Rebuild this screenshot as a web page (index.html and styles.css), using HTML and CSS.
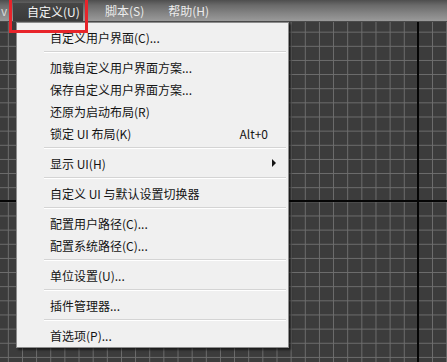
FILE: index.html
```html
<!DOCTYPE html>
<html lang="zh">
<head>
<meta charset="utf-8">
<link rel="stylesheet" href="styles.css">
</head>
<body>
<div class="viewport">
  <div class="menubar">
    <span class="mb-item mb-cut">v</span>
    <span class="mb-item mb-active">自定义(U)</span>
    <span class="mb-item mb-script">脚本(S)</span>
    <span class="mb-item mb-help">帮助(H)</span>
  </div>
  <div class="menu">
    <div class="item">自定义用户界面(C)...</div>
    <div class="sep"></div>
    <div class="item">加载自定义用户界面方案...</div>
    <div class="item">保存自定义用户界面方案...</div>
    <div class="item">还原为启动布局(R)</div>
    <div class="item"><span>锁定 UI 布局(K)</span><span class="key">Alt+0</span></div>
    <div class="sep"></div>
    <div class="item"><span>显示 UI(H)</span><span class="arrow"></span></div>
    <div class="sep"></div>
    <div class="item">自定义 UI 与默认设置切换器</div>
    <div class="sep"></div>
    <div class="item">配置用户路径(C)...</div>
    <div class="item">配置系统路径(C)...</div>
    <div class="sep"></div>
    <div class="item">单位设置(U)...</div>
    <div class="sep"></div>
    <div class="item">插件管理器...</div>
    <div class="sep"></div>
    <div class="item">首选项(P)...</div>
  </div>
  <div class="redbox"></div>
</div>
</body>
</html>
```

FILE: styles.css
```css
html, body {
  margin: 0;
  padding: 0;
}
body {
  width: 447px;
  height: 362px;
  overflow: hidden;
  font-family: "Noto Sans CJK SC", "Noto Sans", sans-serif;
  font-size: 12px;
}
.viewport {
  position: relative;
  width: 447px;
  height: 362px;
  background-color: #3c3c3c;
  background-image:
    linear-gradient(to right, transparent 417px, #050505 417px, #050505 419px, transparent 419px),
    linear-gradient(to bottom, transparent 200px, #050505 200px, #050505 202px, transparent 202px),
    linear-gradient(to right, #6e6e6e 1px, transparent 1px),
    linear-gradient(to bottom, #6e6e6e 1px, transparent 1px);
  background-size: 100% 100%, 100% 100%, 14.15px 100%, 100% 14.15px;
  background-position: 0 0, 0 0, 7.85px 0, 0 3.4px;
  background-repeat: no-repeat, no-repeat, repeat-x, repeat-y;
}
.menubar {
  height: 22px;
  display: flex;
  align-items: stretch;
  background: linear-gradient(to bottom, #4e4e4e 0%, #6a6a6a 25%, #858585 65%, #9a9a9a 100%);
  border-bottom: 1px solid #4a4a4a;
  box-sizing: border-box;
  color: #ececec;
  line-height: 21px;
}
.mb-item {
  display: block;
  white-space: nowrap;
}
.mb-cut {
  width: 13px;
  padding-left: 1px;
  box-sizing: border-box;
  color: #d8d8d8;
}
.mb-active {
  margin-top: 3px;
  line-height: 18px;
  width: 70px;
  padding-left: 14px;
  box-sizing: border-box;
  background: linear-gradient(to bottom, #464646, #3a3a3a);
  color: #f4f4f4;
}
.mb-script {
  margin-left: 22px;
}
.mb-help {
  margin-left: 24px;
}
.menu {
  position: absolute;
  left: 16px;
  top: 22px;
  width: 273px;
  height: 326px;
  box-sizing: border-box;
  padding-top: 3px;
  background: #f0f0f0;
  border: 1px solid #8c8c8c;
  box-shadow: 2px 2px 2px rgba(0, 0, 0, 0.55);
  color: #141414;
}
.item {
  height: 22px;
  display: flex;
  align-items: center;
  justify-content: space-between;
  padding-left: 33px;
  padding-right: 20px;
  white-space: nowrap;
}
.key {
  color: #141414;
}
.arrow {
  width: 0;
  height: 0;
  margin-right: -8px;
  border-top: 4px solid transparent;
  border-bottom: 4px solid transparent;
  border-left: 4px solid #141414;
}
.sep {
  height: 8px;
  display: flex;
  flex-direction: column;
  justify-content: center;
  margin-left: 27px;
  margin-right: 2px;
}
.sep::before {
  content: "";
  display: block;
  border-top: 1px solid #d4d4d4;
  border-bottom: 1px solid #ffffff;
}
.redbox {
  position: absolute;
  left: 9px;
  top: -4px;
  width: 79px;
  height: 37px;
  box-sizing: border-box;
  border: 3px solid #e8242a;
}
```
